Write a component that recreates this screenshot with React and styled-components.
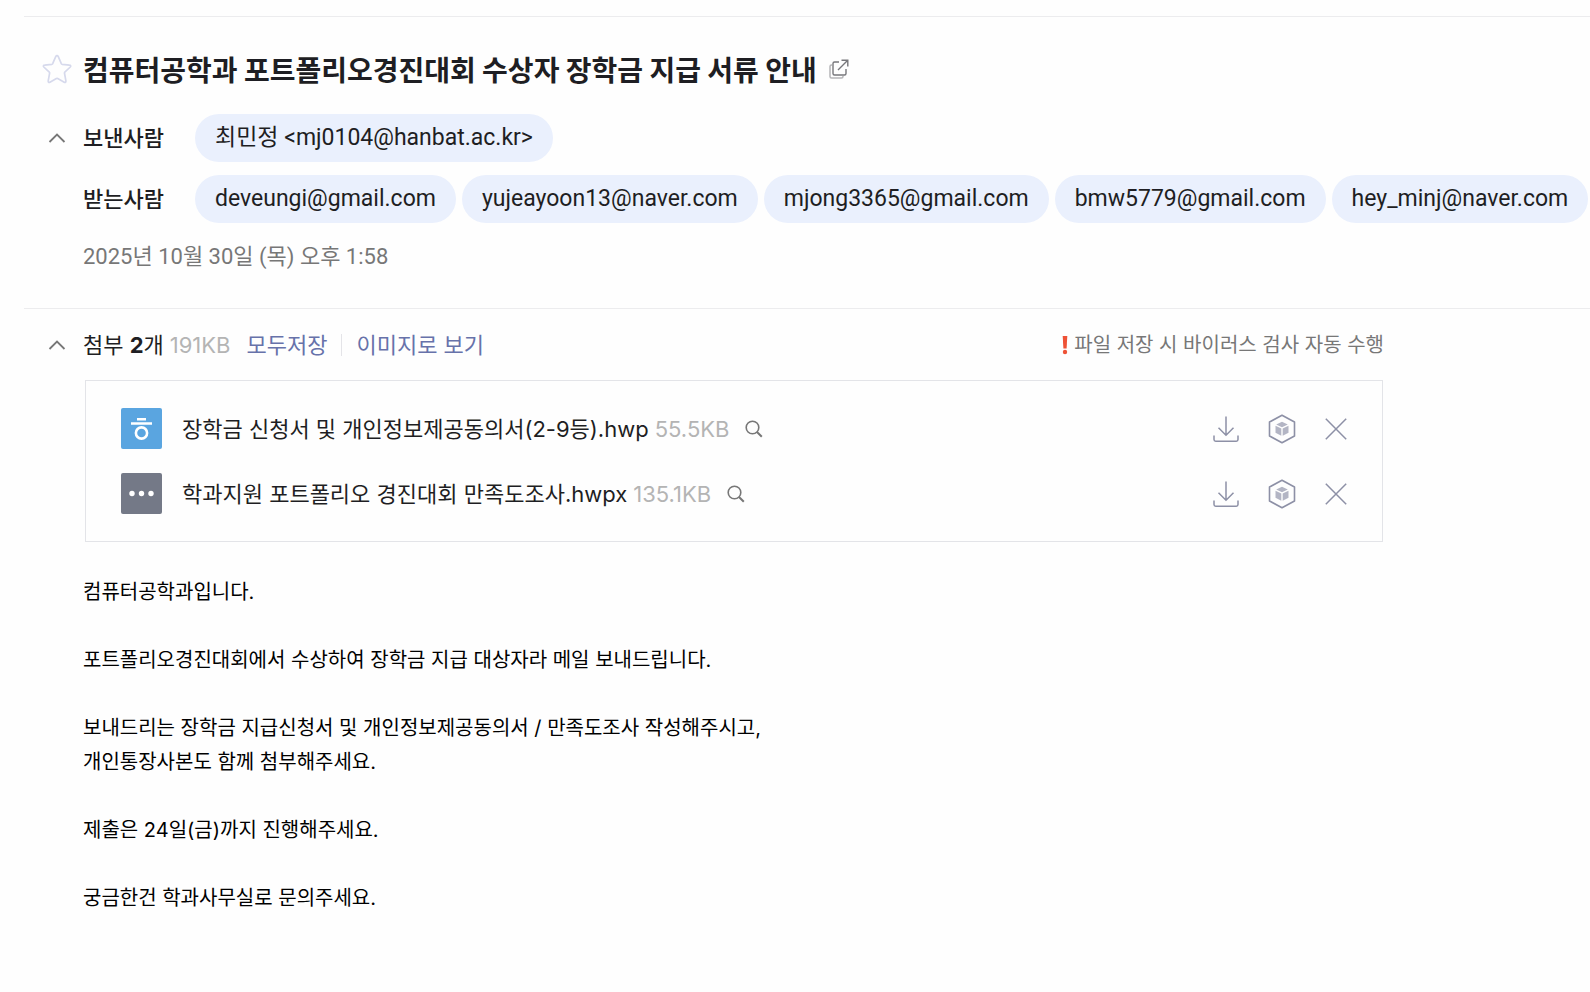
import React, { useState } from "react";
import styled, { createGlobalStyle } from "styled-components";

const GlobalStyle = createGlobalStyle`
  * {
    box-sizing: border-box;
  }
  body {
    margin: 0;
    background-color: #fefefe;
    color: #1e1e23;
    font-family: Inter, "Noto Sans CJK KR", sans-serif;
    font-size: 22px;
    line-height: 32px;
  }
  button {
    display: flex;
    align-items: center;
    padding: 0;
    border: 0;
    background: none;
    color: inherit;
    font: inherit;
    cursor: pointer;
  }
`;

const Page = styled.main`
  padding: 16px 0 40px 24px;
`;
const Header = styled.header`
  border-top: 1px solid #ececee;
  padding: 34px 0 35px;
`;
//every line of the mail has a narrow column for its icon on the left
const Line = styled.div`
  display: grid;
  grid-template-columns: 59px minmax(0, 1fr);
  align-items: center;
  margin-bottom: ${(props) => props.$gap || 0}px;
`;
const IconCell = styled.div`
  display: flex;
  justify-content: center;
  padding-left: 7px;
`;
const TitleBox = styled.div`
  display: flex;
  align-items: center;
  gap: 12px;
`;
const Title = styled.h1`
  margin: 0;
  font-family: "Noto Sans CJK KR", sans-serif;
  font-size: 28px;
  font-weight: 700;
  line-height: 36px;
`;
const People = styled.div`
  display: flex;
  align-items: center;
`;
const PeopleLabel = styled.span`
  flex: 0 0 112px;
  font-weight: 500;
`;
const PeopleList = styled.div`
  display: flex;
  gap: 6px;
`;
const Person = styled.button`
  height: 48px;
  && {
    padding: 0 20px;
    background-color: #eaf0fd;
    font-family: Roboto, "Noto Sans CJK KR", sans-serif;
    font-size: 23px;
  }
  border-radius: 24px;
  white-space: nowrap;
`;
const SentDate = styled.time`
  color: #777;
  font-family: Roboto, "Noto Sans CJK KR", sans-serif;
`;
const Attachments = styled.section`
  border-top: 1px solid #ececee;
  padding-top: 20px;
`;
const AttachBar = styled.div`
  display: flex;
  align-items: center;
  margin-right: 206px;
`;
const Size = styled.span`
  margin-left: 6px;
  color: #b4b4b4;
`;
const SaveLinks = styled.div`
  display: flex;
  align-items: center;
  margin-left: 16px;
  color: #6772aa;
`;
const Divider = styled.span`
  width: 1px;
  height: 22px;
  margin: 0 14px;
  background-color: #e4e4e8;
`;
const VirusNote = styled.span`
  display: flex;
  align-items: center;
  gap: 6px;
  margin-left: auto;
  color: #777;
  font-size: 20px;
`;
const FileList = styled.ul`
  list-style: none;
  display: flex;
  flex-direction: column;
  gap: 24px;
  margin: 19px 207px 0 61px;
  padding: 27px 33px 27px 35px;
  border: 1px solid #e3e4e8;
`;
const File = styled.li`
  display: flex;
  align-items: center;
  height: 41px;
`;
const FileType = styled.span`
  display: flex;
  width: 41px;
  height: 41px;
  margin-right: 20px;
  border-radius: 2px;
  background-color: ${(props) => props.$color};
`;
const Preview = styled.button`
  margin-left: 16px;
`;
const FileActions = styled.div`
  display: flex;
  align-items: center;
  gap: 26px;
  margin-left: auto;
  color: #8d90a6;
`;
const Body = styled.article`
  padding: 33px 206px 0 59px;
  color: #000;
  font-size: 20px;
  line-height: 34px;
`;
const Paragraph = styled.p`
  margin: 0 0 34px;
`;

const StarIcon = () => (
  <svg width="30" height="30" viewBox="0 0 30 30" fill="none">
    <path
      d="M15 1.600c.6 0 1 .4 1.300 1l3 7c.2.4.5.6.9.7l7.300.8c1.200.1 1.600 1.100.8 1.900l-5.500 5.200c-.3.3-.4.7-.3 1.100l1.400 7.600c.2 1.200-.7 1.900-1.700 1.300l-6.500-3.700c-.4-.2-.9-.2-1.300 0l-6.500 3.700c-1 .6-1.900-.1-1.700-1.300l1.400-7.600c.1-.4 0-.8-.3-1.100L1.800 13c-.8-.8-.4-1.800.8-1.900l7.200-.8c.4-.1.7-.3.9-.7l3-7c.3-.6.7-1 1.300-1z"
      stroke="#d6d9ec"
      strokeWidth="1.700"
    />
  </svg>
);
const ChevronIcon = () => (
  <svg width="18" height="12" viewBox="0 0 18 12" fill="none">
    <path d="M1.500 10 9 2.500 16.500 10" stroke="#777" strokeWidth="1.800" />
  </svg>
);
const PopupIcon = () => (
  <svg width="20" height="20" viewBox="0 0 20 20" fill="none">
    <path
      d="M3 6H2.500Q1 6 1 7.500V17.500Q1 19 2.500 19H12.500Q14 19 14 17.500V17"
      stroke="#b5b5b8"
      strokeWidth="1.500"
    />
    <path
      d="M10 3H5.500Q4 3 4 4.500V14.500Q4 16 5.500 16H15.500Q17 16 17 14.500V10M9 11 18.500 1.500M12.500 1.200H18.800V7.500"
      stroke="#77777b"
      strokeWidth="1.400"
    />
  </svg>
);
const SearchIcon = () => (
  <svg width="18" height="18" viewBox="0 0 18 18" fill="none">
    <circle cx="7.500" cy="7.500" r="6.300" stroke="#777" strokeWidth="1.600" />
    <path d="m12 12 4.800 4.800" stroke="#777" strokeWidth="2" />
  </svg>
);
const AlertIcon = () => (
  <svg width="6" height="20" viewBox="0 0 6 20" fill="#ee5236">
    <path d="M.7 1H5.300L4.600 13.500H1.400z" />
    <circle cx="3" cy="17" r="2.200" />
  </svg>
);
const HwpIcon = () => (
  <svg width="41" height="41" viewBox="0 0 41 41" fill="none" stroke="#fff">
    <path d="M16 11.200h9M10 15.500h21" strokeWidth="2.600" />
    <circle cx="20.500" cy="25" r="5.600" strokeWidth="2.600" />
  </svg>
);
const EtcIcon = () => (
  <svg width="41" height="41" viewBox="0 0 41 41" fill="#fff">
    <circle cx="11" cy="20.500" r="2.700" />
    <circle cx="20.500" cy="20.500" r="2.700" />
    <circle cx="30" cy="20.500" r="2.700" />
  </svg>
);
const DownloadIcon = () => (
  <svg width="30" height="30" viewBox="0 0 30 30" fill="none" stroke="currentColor">
    <path d="M15 2.500V21M7.500 13.800 15 21.300l7.500-7.500" strokeWidth="1.500" />
    <path d="M3 21.500V25.500Q3 27.200 4.700 27.200H25.300Q27 27.200 27 25.500V21.500" strokeWidth="1.500" />
  </svg>
);
const CloudIcon = () => (
  <svg width="30" height="30" viewBox="0 0 30 30" fill="none">
    <path
      d="M15 1.200 27.500 8V22L15 28.800 2.500 22V8z"
      stroke="currentColor"
      strokeWidth="1.600"
      strokeLinejoin="round"
    />
    <path
      d="M15 7.800 20.800 10.500 15 13.300 9.200 10.500zM8.500 11.800 14.300 14.600V21.800L8.500 18.800zM21.500 11.800 15.700 14.600V21.800L21.500 18.800z"
      fill="#b3b5c4"
    />
  </svg>
);
const CloseIcon = () => (
  <svg width="26" height="26" viewBox="0 0 26 26" fill="none">
    <path d="M2.800 2.800 23.200 23.200M23.200 2.800 2.800 23.200" stroke="currentColor" strokeWidth="1.500" />
  </svg>
);

const receivers = [
  "deveungi@gmail.com",
  "yujeayoon13@naver.com",
  "mjong3365@gmail.com",
  "bmw5779@gmail.com",
  "hey_minj@naver.com",
];

const attachedFiles = [
  { name: "장학금 신청서 및 개인정보제공동의서(2-9등).hwp", size: "55.5KB", type: "hwp" },
  { name: "학과지원 포트폴리오 경진대회 만족도조사.hwpx", size: "135.1KB", type: "etc" },
];

function AttachedFile({ file, onRemove }) {
  const isHwp = file.type === "hwp";
  return (
    <File>
      <FileType $color={isHwp ? "#5aa5e0" : "#747987"}>
        {isHwp ? <HwpIcon /> : <EtcIcon />}
      </FileType>
      <button type="button">{file.name}</button>
      <Size>{file.size}</Size>
      <Preview type="button" aria-label="미리보기">
        <SearchIcon />
      </Preview>
      <FileActions>
        <button type="button" aria-label="저장">
          <DownloadIcon />
        </button>
        <button type="button" aria-label="MYBOX에 저장">
          <CloudIcon />
        </button>
        <button type="button" aria-label="삭제" onClick={onRemove}>
          <CloseIcon />
        </button>
      </FileActions>
    </File>
  );
}

function App() {
  const [files, setFiles] = useState(attachedFiles);
  //these hold whether the receivers and the file list are unfolded
  const [showPeople, setShowPeople] = useState(true);
  const [showFiles, setShowFiles] = useState(true);

  return (
    <Page>
      <GlobalStyle />
      <Header>
        <Line $gap={27}>
          <IconCell>
            <button type="button" aria-label="중요 표시">
              <StarIcon />
            </button>
          </IconCell>
          <TitleBox>
            <Title>컴퓨터공학과 포트폴리오경진대회 수상자 장학금 지급 서류 안내</Title>
            <button type="button" aria-label="새 창으로 보기">
              <PopupIcon />
            </button>
          </TitleBox>
        </Line>
        <Line $gap={13}>
          <IconCell>
            <button
              type="button"
              aria-label="받는사람 접기"
              onClick={() => setShowPeople(!showPeople)}
            >
              <ChevronIcon />
            </button>
          </IconCell>
          <People>
            <PeopleLabel>보낸사람</PeopleLabel>
            <Person type="button">최민정 &lt;mj0104@hanbat.ac.kr&gt;</Person>
          </People>
        </Line>
        {showPeople && (
          <Line $gap={18}>
            <span />
            <People>
              <PeopleLabel>받는사람</PeopleLabel>
              <PeopleList>
                {receivers.map((email) => (
                  <Person type="button" key={email}>
                    {email}
                  </Person>
                ))}
              </PeopleList>
            </People>
          </Line>
        )}
        <Line>
          <span />
          <SentDate dateTime="2025-10-30T13:58">2025년 10월 30일 (목) 오후 1:58</SentDate>
        </Line>
      </Header>

      <Attachments>
        <Line>
          <IconCell>
            <button
              type="button"
              aria-label="첨부파일 접기"
              onClick={() => setShowFiles(!showFiles)}
            >
              <ChevronIcon />
            </button>
          </IconCell>
          <AttachBar>
            <span>
              첨부 <b>{files.length}</b>개
            </span>
            <Size>191KB</Size>
            <SaveLinks>
              <button type="button">모두저장</button>
              <Divider />
              <button type="button">이미지로 보기</button>
            </SaveLinks>
            <VirusNote>
              <AlertIcon />
              파일 저장 시 바이러스 검사 자동 수행
            </VirusNote>
          </AttachBar>
        </Line>
        {showFiles && (
          <FileList>
            {files.map((file) => (
              <AttachedFile
                key={file.name}
                file={file}
                onRemove={() => setFiles(files.filter((item) => item !== file))}
              />
            ))}
          </FileList>
        )}
      </Attachments>

      <Body>
        <Paragraph>컴퓨터공학과입니다.</Paragraph>
        <Paragraph>
          포트폴리오경진대회에서 수상하여 장학금 지급 대상자라 메일 보내드립니다.
        </Paragraph>
        <Paragraph>
          보내드리는 장학금 지급신청서 및 개인정보제공동의서 / 만족도조사 작성해주시고,
          <br />
          개인통장사본도 함께 첨부해주세요.
        </Paragraph>
        <Paragraph>제출은 24일(금)까지 진행해주세요.</Paragraph>
        <Paragraph>궁금한건 학과사무실로 문의주세요.</Paragraph>
      </Body>
    </Page>
  );
}

export default App;
